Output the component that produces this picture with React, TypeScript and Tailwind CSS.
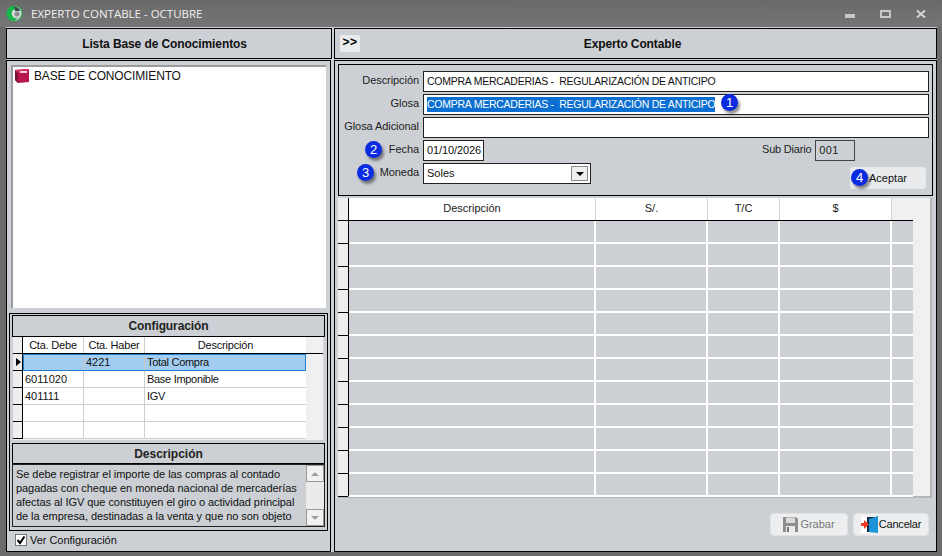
const font = "font-['Liberation_Sans',Arial,sans-serif]";

function Badge({ n, className }: { n: number; className: string }) {
  return (
    <span
      className={`absolute flex h-[17px] w-[17px] items-center justify-center rounded-full bg-[#0b2be0] text-[13px] text-white shadow-[2px_3px_3px_rgba(0,0,0,0.45)] ${className}`}
    >
      {n}
    </span>
  );
}

function AppIcon() {
  return (
    <svg width="17" height="17" viewBox="0 0 17 17">
      <circle cx="8.5" cy="8.5" r="8" fill="#16b648" />
      <path d="M8 1 A7.5 7.5 0 0 1 8 16 A8 8 0 0 0 12 8 A6 6 0 0 0 8 1 Z" fill="#b9bec2" />
      <circle cx="10.5" cy="8.5" r="4.8" fill="#d6d9dc" />
      <path d="M8 1.5 A6.5 6.5 0 0 1 14 6 L9 6 Z" fill="#3c4a44" />
      <circle cx="11" cy="9" r="2.6" fill="#8b9094" />
    </svg>
  );
}

function BookIcon() {
  return (
    <svg width="16" height="16" viewBox="0 0 16 16">
      <path d="M1 2 L13 1 L15 3 L15 14 L4 15 L1 12 Z" fill="#b8174e" />
      <path d="M1 2 L4 5 L4 15 L1 12 Z" fill="#7c0f33" />
      <path d="M4 5 L15 3 L15 1 L13 1 L1 2 Z" fill="#d0305f" />
      <rect x="6" y="3" width="7" height="2" fill="#f4cdd6" />
    </svg>
  );
}

function FloppyIcon() {
  return (
    <svg width="15" height="15" viewBox="0 0 15 15">
      <rect width="15" height="15" fill="#f7f7f7" />
      <path d="M0 0 H13 L15 2 V15 H0 Z" fill="#8e8e8e" />
      <rect x="3" y="0.5" width="9" height="5.5" fill="#dcdcdc" />
      <rect x="3" y="9" width="9" height="6" fill="#ececec" />
      <rect x="4" y="10" width="2" height="5" fill="#777" />
    </svg>
  );
}

function DoorIcon() {
  return (
    <svg width="17" height="17" viewBox="0 0 17 17">
      <rect width="8" height="17" fill="#ffffff" />
      <rect x="6" y="1" width="10" height="15" fill="#12293f" />
      <path d="M8 3 L17 0 V17 L8 16 Z" fill="#1d93d8" />
      <path d="M0 7 H3 V4 L8 8.5 L3 13 V10 H0 Z" fill="#f03a24" />
    </svg>
  );
}

function ConfigGrid() {
  const rows = [
    ["", "4221", "Total Compra"],
    ["6011020", "", "Base Imponible"],
    ["401111", "", "IGV"],
    ["", "", ""],
    ["", "", ""],
  ];
  return (
    <div className="mx-[3px] h-[103px] overflow-hidden border-r border-[#d8d8d8] bg-[#f0f0f0] text-[11px] text-[#111]">
      <div className="flex h-[17px] border-b border-black tracking-[-0.2px]">
        <div className="w-[10px] shrink-0 border-r border-black bg-[#eeeeee]" />
        <div className="w-[61px] shrink-0 border-r border-[#cfcfcf] bg-white text-center leading-[16px]">Cta. Debe</div>
        <div className="w-[61px] shrink-0 border-r border-[#cfcfcf] bg-white text-center leading-[16px]">Cta. Haber</div>
        <div className="w-[161px] shrink-0 bg-white text-center leading-[16px]">Descripción</div>
      </div>
      {rows.map((r, i) => (
        <div key={i} className="flex h-[17px]">
          <div className="flex w-[10px] shrink-0 items-center justify-end border-r border-b border-black bg-[#eeeeee]">
            {i === 0 && <span className="mr-px h-0 w-0 border-y-[4px] border-l-[5px] border-y-transparent border-l-black" />}
          </div>
          {i === 0 ? (
            <div className="flex w-[283px] shrink-0 border border-[#1e7fd0] bg-[#a3cdf0]">
              <div className="w-[60px] shrink-0 border-r border-[#c8c8c8]" />
              <div className="w-[61px] shrink-0 border-r border-[#c8c8c8] pl-[2px] leading-[14px]">{r[1]}</div>
              <div className="pl-[2px] leading-[14px] tracking-[-0.3px]">{r[2]}</div>
            </div>
          ) : (
            <>
              <div className="w-[61px] shrink-0 border-r border-b border-[#cfcfcf] bg-white pl-[2px] leading-[16px]">{r[0]}</div>
              <div className="w-[61px] shrink-0 border-r border-b border-[#cfcfcf] bg-white" />
              <div className="w-[161px] shrink-0 border-b border-[#cfcfcf] bg-white pl-[2px] leading-[16px] tracking-[-0.3px]">{r[2]}</div>
            </>
          )}
        </div>
      ))}
    </div>
  );
}

function DescriptionBox() {
  return (
    <div className="mx-[2px] flex h-[63px] border border-[#222] bg-[#ccd0d4] text-[11px] leading-[14px] tracking-[-0.06px] text-[#111]">
      <div className="flex-1 overflow-hidden pt-[2px] pl-[3px] whitespace-nowrap">
        Se debe registrar el importe de las compras al contado
        <br />
        pagadas con cheque en moneda nacional de mercaderías
        <br />
        afectas al IGV que constituyen el giro o actividad principal
        <br />
        de la empresa, destinadas a la venta y que no son objeto
      </div>
      <div className="flex w-[18px] shrink-0 flex-col bg-[#ebebeb]">
        <div className="flex h-[17px] items-center justify-center border border-[#9a9a9a] bg-[#f2f2f2]">
          <span className="h-0 w-0 border-x-[4px] border-b-[4px] border-x-transparent border-b-[#a0a0a0]" />
        </div>
        <div className="flex-1" />
        <div className="flex h-[17px] items-center justify-center border border-[#9a9a9a] bg-[#f2f2f2]">
          <span className="h-0 w-0 border-x-[4px] border-t-[4px] border-x-transparent border-t-[#a0a0a0]" />
        </div>
      </div>
    </div>
  );
}

function LeftPane() {
  return (
    <div className="flex w-[326px] shrink-0 flex-col">
      <div className="flex h-[31px] items-center justify-center border border-black pr-[9px] text-[12px] font-bold tracking-[-0.1px] text-[#111]">
        Lista Base de Conocimientos
      </div>
      <div className="mt-px flex h-[492px] w-[325px] flex-col border border-black px-[2px] pt-[4px]">
        <div className="mx-[2px] flex h-[243px] items-start border-t-2 border-l-2 border-[#9c9c9c] bg-white pt-px pl-px text-[12px] tracking-[-0.15px] text-[#111]">
          <BookIcon />
          <span className="ml-[4px] leading-[16px]">BASE DE CONOCIMIENTO</span>
        </div>
        <div className="mt-[5px] flex h-[218px] flex-col border border-black pt-px">
          <div className="mx-[2px] flex h-[22px] items-center justify-center border border-black text-[12px] font-bold tracking-[-0.1px] text-[#222]">
            Configuración
          </div>
          <ConfigGrid />
          <div className="mx-[2px] mt-[3px] flex h-[21px] items-center justify-center border border-black text-[12px] font-bold text-[#222]">
            Descripción
          </div>
          <DescriptionBox />
        </div>
        <label className="mt-[1px] ml-[6px] flex items-center text-[11px] tracking-[-0.04px] text-[#111]">
          <span className="flex h-[12px] w-[12px] items-center justify-center border border-[#777] bg-white">
            <svg width="10" height="10" viewBox="0 0 10 10">
              <path d="M1.5 5 L4 8 L8.5 1.5" fill="none" stroke="#000" strokeWidth="2" />
            </svg>
          </span>
          <span className="ml-[3px]">Ver Configuración</span>
        </label>
      </div>
    </div>
  );
}

function Field({ label, children }: { label: string; children: React.ReactNode }) {
  return (
    <div className="mt-[2px] flex h-[21px] items-start first:mt-0">
      <div className="w-[81px] shrink-0 pr-[4px] text-right text-[11px] leading-[18px] tracking-[-0.07px] whitespace-nowrap text-[#222]">{label}</div>
      {children}
    </div>
  );
}

function Input({ children, className }: { children?: React.ReactNode; className: string }) {
  return (
    <div className={`flex h-[21px] items-center border border-[#222] bg-white pl-[3px] text-[11px] whitespace-pre text-[#111] ${className}`}>
      {children}
    </div>
  );
}

function FormPanel() {
  return (
    <div className="relative mx-[3px] mt-[3px] h-[132px] border border-black pt-[6px] pr-[3px] pl-[3px]">
      <Field label="Descripción">
        <Input className="flex-1">
          <span className="text-[10.5px] tracking-[-0.25px]">COMPRA MERCADERIAS -  REGULARIZACIÓN DE ANTICIPO</span>
        </Input>
      </Field>
      <Field label="Glosa">
        <Input className="flex-1">
          <span className="bg-[#0a6fd0] text-[10.5px] tracking-[-0.25px] text-white">COMPRA MERCADERIAS -  REGULARIZACIÓN DE ANTICIPO</span>
        </Input>
      </Field>
      <Field label="Glosa Adicional">
        <Input className="flex-1" />
      </Field>
      <Field label="Fecha">
        <Input className="w-[61px] tracking-[-0.1px]">01/10/2026</Input>
        <span className="ml-[278px] text-[11px] leading-[18px] tracking-[-0.2px] text-[#222]">Sub Diario</span>
        <div className="ml-[4px] flex h-[21px] w-[40px] items-center border border-[#444] pl-[3px] text-[11px] tracking-[0.3px] text-[#222]">001</div>
      </Field>
      <Field label="Moneda">
        <Input className="w-[168px]">
          Soles
          <span className="mr-[2px] ml-auto flex h-[15px] w-[17px] items-center justify-center border border-[#8a8a8a] bg-[#f0f0f0]">
            <span className="h-0 w-0 border-x-[4px] border-t-[4px] border-x-transparent border-t-black" />
          </span>
        </Input>
        <div className="mt-[4px] ml-[259px] flex h-[22px] w-[76px] items-center rounded-[3px] bg-[#e8eaec] pl-[19px] text-[11px] text-[#111]">
          Aceptar
        </div>
      </Field>
      <Badge n={1} className="top-[29px] left-[382px]" />
      <Badge n={2} className="top-[76px] left-[26px]" />
      <Badge n={3} className="top-[99px] left-[18px]" />
      <Badge n={4} className="top-[104px] left-[512px]" />
    </div>
  );
}

function EntryGrid() {
  const widths = ["w-[247px]", "w-[112px]", "w-[72px]", "w-[112px]"];
  const heads = ["Descripción", "S/.", "T/C", "$"];
  return (
    <div className="mx-[3px] mt-[2px] flex h-[300px] w-[594px] border-r-2 border-b-2 border-[#b4b4b4] bg-[#f0f0f0] text-[11px] text-[#222]">
      <div className="w-[11px] shrink-0 border-r border-black bg-[#eeeeee]">
        <div className="h-[23px] border-b border-black" />
        {Array.from({ length: 12 }).map((_, i) => (
          <div key={i} className="h-[23px] border-b border-black" />
        ))}
      </div>
      <div className="w-[564px] shrink-0">
        <div className="flex h-[23px] border-b border-black">
          {heads.map((h, i) => (
            <div key={h} className={`${widths[i]} border-r border-[#d4d4d4] bg-white text-center leading-[21px]`}>
              {h}
            </div>
          ))}
        </div>
        {Array.from({ length: 12 }).map((_, i) => (
          <div key={i} className="flex h-[23px] border-b-2 border-white">
            {widths.map((w, j) => (
              <div key={j} className={`${w} border-r-2 border-white bg-[#ccd0d4]`} />
            ))}
            <div className="flex-1 bg-[#ccd0d4]" />
          </div>
        ))}
      </div>
    </div>
  );
}

function RightPane() {
  return (
    <div className="flex w-[603px] shrink-0 flex-col">
      <div className="relative flex h-[31px] items-center justify-center border border-black pr-[6px] text-[12px] font-bold tracking-[-0.12px] text-[#111]">
        <span className="absolute top-[6px] left-[5px] flex h-[17px] w-[20px] items-center justify-center rounded-[2px] bg-[#e9ebed] pb-[3px] text-[12px] leading-none tracking-[0.5px] text-black">
          &gt;&gt;
        </span>
        Experto Contable
      </div>
      <div className="mt-px flex h-[492px] flex-col border border-black">
        <FormPanel />
        <EntryGrid />
        <div className="mt-[15px] flex justify-end gap-[5px] pr-[7px] text-[11px]">
          <div className="flex h-[23px] w-[78px] items-center justify-center gap-[2px] rounded-[4px] border border-[#dfe1e3] bg-[#eceef0] text-[#777]">
            <FloppyIcon />
            Grabar
          </div>
          <div className="flex h-[23px] w-[76px] items-center justify-center gap-px rounded-[4px] border border-[#dfe1e3] bg-[#eceef0] tracking-[-0.2px] text-[#111]">
            <DoorIcon />
            Cancelar
          </div>
        </div>
      </div>
    </div>
  );
}

export default function App() {
  return (
    <div className={`${font} flex h-[556px] w-[942px] flex-col overflow-hidden bg-[#6b6b6b]`}>
      <div className="flex h-[27px] shrink-0 items-center bg-gradient-to-b from-[#6a6a6a] to-[#757575] pr-[16px] pl-[6px] text-white">
        <AppIcon />
        <span className="ml-[8px] font-['Open_Sans',sans-serif] text-[11.5px] text-[#f0f0f0]">EXPERTO CONTABLE - OCTUBRE</span>
        <div className="ml-auto flex items-center gap-[25px]">
          <span className="mt-[5px] h-[4px] w-[10px] bg-[#c8c8c8]" />
          <span className="h-[8px] w-[11px] border-2 border-[#c8c8c8]" />
          <svg width="10" height="8" viewBox="0 0 10 8">
            <path d="M1 0.5 L9 7.5 M9 0.5 L1 7.5" stroke="#d4d4d4" strokeWidth="2" />
          </svg>
        </div>
      </div>
      <div className="mr-[5px] ml-[6px] flex h-[525px] gap-[2px] bg-[#ccd0d4] pt-px">
        <LeftPane />
        <RightPane />
      </div>
    </div>
  );
}
